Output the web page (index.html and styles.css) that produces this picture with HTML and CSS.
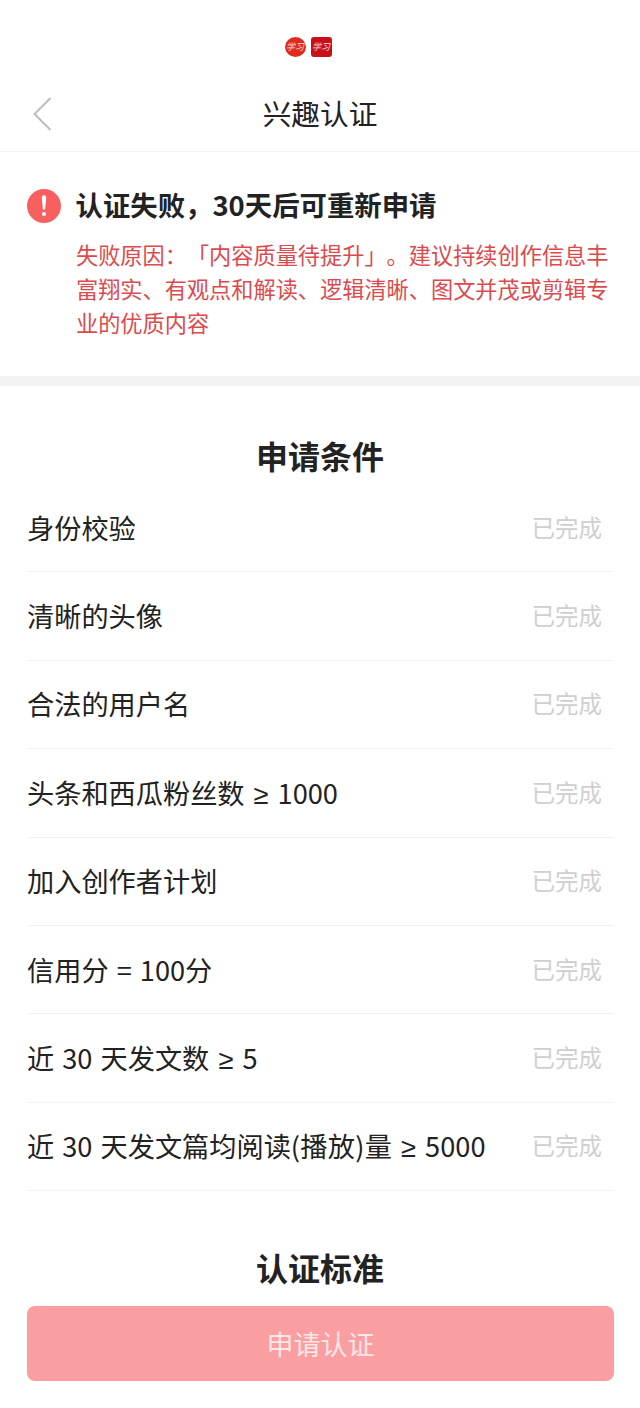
FILE: index.html
```html
<!DOCTYPE html>
<html>
<head>
  <meta charset="utf-8">
  <title>兴趣认证</title>
  <link rel="stylesheet" href="styles.css">
</head>
<body>

  <div class="status-bar">
    <span class="badge badge-round">学习</span>
    <span class="badge badge-square">学习</span>
  </div>

  <div class="nav">
    <svg class="back" width="20" height="34" viewBox="0 0 20 34">
      <path d="M18.5 1 L2.5 17 L18.5 33" fill="none" stroke="#bdbdbd" stroke-width="2"/>
    </svg>
    <span class="nav-title">兴趣认证</span>
  </div>

  <div class="notice">
    <div class="notice-head">
      <svg class="notice-icon" width="34" height="34" viewBox="0 0 34 34">
        <circle cx="17" cy="17" r="17" fill="#f85f5f"/>
        <path d="M14.8 8.5 a2.2 2.2 0 0 1 4.4 0 L18.2 19.5 a1.2 1.2 0 0 1 -2.4 0 Z" fill="#fff"/>
        <circle cx="17" cy="25" r="2.1" fill="#fff"/>
      </svg>
      <span class="notice-title">认证失败，30天后可重新申请</span>
    </div>
    <p class="notice-text">失败原因：「内容质量待提升」。建议持续创作信息丰富翔实、有观点和解读、逻辑清晰、图文并茂或剪辑专业的优质内容</p>
  </div>

  <div class="divider"></div>

  <h2 class="section-title first">申请条件</h2>
  <ul class="rows">
    <li class="row"><span>身份校验</span><span class="done">已完成</span></li>
    <li class="row"><span>清晰的头像</span><span class="done">已完成</span></li>
    <li class="row"><span>合法的用户名</span><span class="done">已完成</span></li>
    <li class="row"><span>头条和西瓜粉丝数 <span class="op">≥</span> 1000</span><span class="done">已完成</span></li>
    <li class="row"><span>加入创作者计划</span><span class="done">已完成</span></li>
    <li class="row"><span>信用分 = 100分</span><span class="done">已完成</span></li>
    <li class="row"><span>近 30 天发文数 <span class="op">≥</span> 5</span><span class="done">已完成</span></li>
    <li class="row"><span>近 30 天发文篇均阅读<span class="paren">(播放)</span>量 <span class="op">≥</span> 5000</span><span class="done">已完成</span></li>
  </ul>

  <h2 class="section-title second">认证标准</h2>
  <div class="apply">申请认证</div>

</body>
</html>
```

FILE: styles.css
```css
* { box-sizing: border-box; }
html, body { margin: 0; padding: 0; }
body { width: 640px; height: 1408px; overflow: hidden; background: #fff; color: #222; font-family: "Noto Sans CJK SC", "Noto Sans", sans-serif; text-spacing-trim: space-all; }

.status-bar { height: 88px; padding: 37px 24px 0 0; display: flex; justify-content: center; gap: 5px; }
.badge { width: 21px; height: 20px; color: #f8dcdc; font-size: 9px; font-style: italic; line-height: 20px; text-align: center; overflow: hidden; white-space: nowrap; }
.badge-round { border-radius: 50%; background: #e02a20; }
.badge-square { border-radius: 3px; background: #c8101a; }

.nav { height: 64px; padding-bottom: 13px; display: flex; align-items: center; justify-content: center; position: relative; border-bottom: 1px solid #f4f4f4; }
.back { position: absolute; left: 32px; top: 9px; }
.nav-title { font-size: 28.7px; line-height: 48px; color: #222; }

.notice { height: 224px; padding: 37px 26px 0 27px; }
.notice-head { display: flex; align-items: center; gap: 14.5px; height: 34px; }
.notice-title { font-size: 27.4px; font-weight: 700; line-height: 30px; padding-bottom: 5px; color: #222; }
.notice-text { margin: 14px 0 0 49px; font-size: 22.2px; line-height: 34px; color: #dc4a4d; }

.divider { height: 10px; background: #f3f3f3; }

.section-title { margin: 0; text-align: center; font-size: 32px; font-weight: 700; color: #222; line-height: 40px; }
.section-title.first { padding-top: 49px; height: 98px; }
.section-title.second { margin-top: 56px; height: 44px; }

.rows { list-style: none; margin: 0; padding: 0 26px 0 27px; }
.row { height: 88.4px; padding: 0 12px 2px 0; display: flex; justify-content: space-between; align-items: center; border-bottom: 1px solid #f2f2f2; font-size: 27.2px; word-spacing: 2px; color: #222; }
.op { font-family: "Liberation Sans", sans-serif; margin: 0 1px; }
.paren { letter-spacing: 0.3px; }
.done { font-size: 23.5px; color: #cfcfcf; }

.apply { margin: 15px 26px 0 27px; height: 75px; border-radius: 8px; background: #fa9ea1; color: #fde7e7; font-size: 27px; line-height: 75px; text-align: center; }
```
